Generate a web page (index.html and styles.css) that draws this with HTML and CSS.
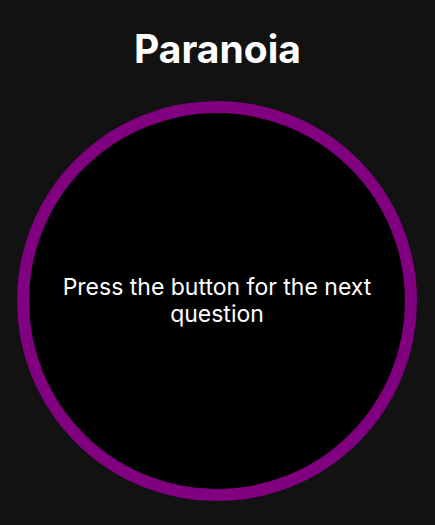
FILE: index.html
```html
<!DOCTYPE html>
<html lang="en">
<head>
<meta charset="utf-8">
<title>Paranoia</title>
<link rel="stylesheet" href="styles.css">
</head>
<body>
<main class="app">
  <h1 class="title">Paranoia</h1>
  <div class="circle">
    <p class="question">Press the button for the next question</p>
  </div>
</main>
</body>
</html>
```

FILE: styles.css
```css
html, body {
  margin: 0;
  padding: 0;
  background: #121212;
}
body {
  font-family: Inter, "Noto Sans", sans-serif;
  color: #fff;
}
.app {
  display: flex;
  flex-direction: column;
  align-items: center;
  padding-top: 25px;
}
.title {
  margin: 0 0 29px;
  font-size: 39px;
  line-height: 47px;
  font-weight: 700;
}
.circle {
  box-sizing: border-box;
  width: 400px;
  height: 400px;
  margin-right: 1px;
  border: 12px solid #800080;
  border-radius: 50%;
  background: #000;
  display: flex;
  align-items: center;
  justify-content: center;
  padding: 0 20px;
}
.question {
  margin: 0;
  font-size: 23px;
  line-height: 27px;
  text-align: center;
}
```
